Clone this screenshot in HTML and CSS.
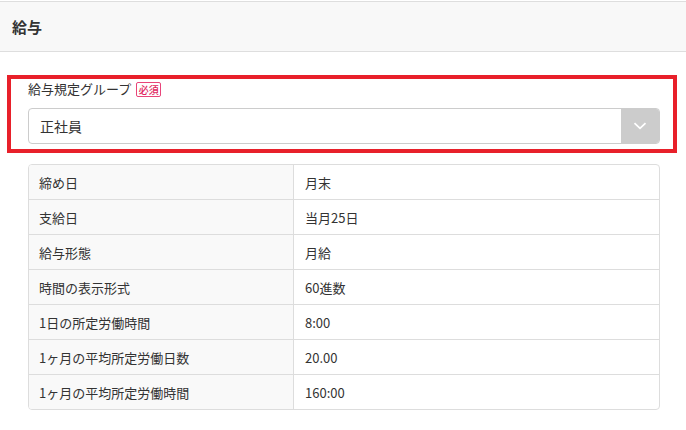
FILE: index.html
```html
<!DOCTYPE html>
<html lang="ja">
<head>
<meta charset="utf-8">
<link rel="stylesheet" href="styles.css">
</head>
<body>
<div class="page">
  <header class="header"><h1 class="title">給与</h1></header>
  <div class="field-box">
    <div class="label-row">
      <span class="label">給与規定グループ</span>
      <span class="badge">必須</span>
    </div>
    <div class="select">
      <span class="select-value">正社員</span>
      <span class="select-btn">
        <svg width="14" height="8" viewBox="0 0 14 8"><path d="M1.5 1.2 L7 6.3 L12.5 1.2" fill="none" stroke="#fff" stroke-width="1.8"/></svg>
      </span>
    </div>
  </div>
  <div class="table">
    <div class="row"><div class="th">締め日</div><div class="td">月末</div></div>
    <div class="row"><div class="th">支給日</div><div class="td">当月25日</div></div>
    <div class="row"><div class="th">給与形態</div><div class="td">月給</div></div>
    <div class="row"><div class="th">時間の表示形式</div><div class="td">60進数</div></div>
    <div class="row"><div class="th">1日の所定労働時間</div><div class="td">8:00</div></div>
    <div class="row"><div class="th">1ヶ月の平均所定労働日数</div><div class="td">20.00</div></div>
    <div class="row"><div class="th">1ヶ月の平均所定労働時間</div><div class="td">160:00</div></div>
  </div>
</div>
</body>
</html>
```
FILE: styles.css
```css
html, body {
  margin: 0;
  padding: 0;
  background: #fff;
}
body {
  font-family: "Noto Sans CJK JP", "Noto Sans", sans-serif;
  color: #333;
}
.page {
  width: 686px;
  padding-top: 1px;
}
.header {
  height: 49px;
  background: #f8f8f8;
  border-top: 1px solid #dedede;
  border-bottom: 1px solid #dedede;
  display: flex;
  align-items: center;
  padding-left: 12px;
}
.title {
  margin: 0;
  font-size: 15px;
  font-weight: bold;
  color: #333;
  line-height: 20px;
}
.field-box {
  margin: 23px 9px 0 7px;
  border: 4px solid #e8202a;
  padding: 0 13px 5px 17px;
}
.label-row {
  height: 20px;
  display: flex;
  align-items: center;
  gap: 5px;
}
.label {
  font-size: 13px;
  line-height: 20px;
  color: #333;
}
.badge {
  box-sizing: border-box;
  height: 15px;
  width: 25px;
  border: 1px solid #e8457a;
  border-radius: 2px;
  color: #e0245e;
  font-size: 10px;
  font-weight: 500;
  line-height: 13px;
  text-align: center;
}
.select {
  margin-top: 9px;
  height: 36px;
  box-sizing: border-box;
  border: 1px solid #cccccc;
  border-radius: 4px;
  display: flex;
  align-items: center;
  overflow: hidden;
}
.select-value {
  flex: 1;
  padding-left: 11px;
  font-size: 14px;
  color: #333;
}
.select-btn {
  width: 38px;
  align-self: stretch;
  background: #cccccc;
  display: flex;
  align-items: center;
  justify-content: center;
}
.table {
  margin: 11px 26px 0 28px;
  border: 1px solid #dddddd;
  border-radius: 4px;
  overflow: hidden;
}
.row {
  display: flex;
  height: 34px;
  border-top: 1px solid #dddddd;
}
.row:first-child {
  border-top: none;
}
.th {
  width: 254px;
  padding-left: 10px;
  background: #f9f9f9;
  border-right: 1px solid #dddddd;
  display: flex;
  align-items: center;
  font-size: 13px;
}
.td {
  flex: 1;
  padding-left: 11px;
  display: flex;
  align-items: center;
  font-size: 13px;
}
```
